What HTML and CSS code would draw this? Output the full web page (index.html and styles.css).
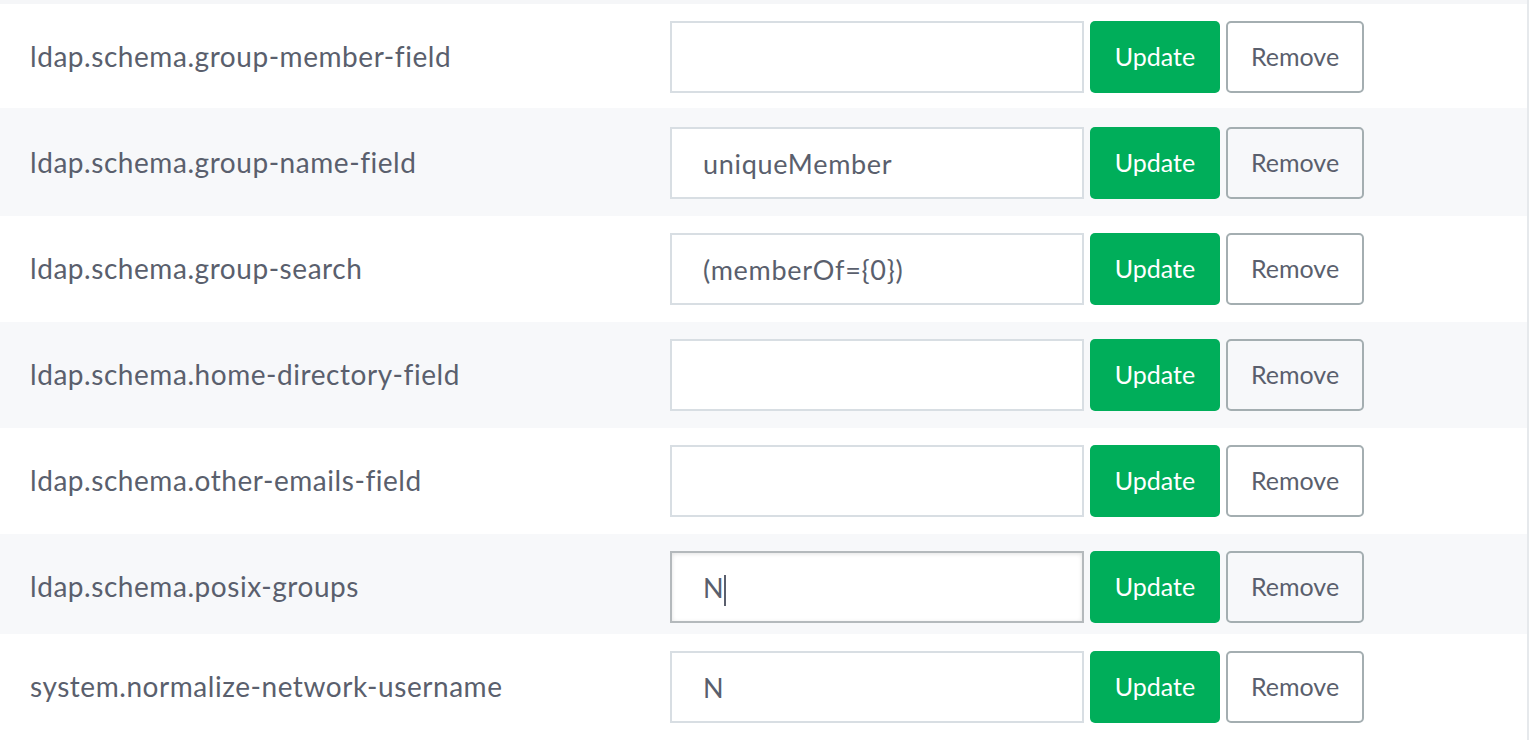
FILE: index.html
```html
<!DOCTYPE html>
<html lang="en">
<head>
<meta charset="utf-8">
<title>Settings</title>
<link rel="stylesheet" href="styles.css">
</head>
<body>
<div class="table">
  <div class="strip"></div>
  <div class="row row--first">
    <div class="label">ldap.schema.group-member-field</div>
    <div class="controls">
      <div class="field"></div>
      <button class="btn btn-update">Update</button>
      <button class="btn btn-remove">Remove</button>
    </div>
  </div>
  <div class="row row--alt row--tall">
    <div class="label">ldap.schema.group-name-field</div>
    <div class="controls">
      <div class="field">uniqueMember</div>
      <button class="btn btn-update">Update</button>
      <button class="btn btn-remove">Remove</button>
    </div>
  </div>
  <div class="row">
    <div class="label">ldap.schema.group-search</div>
    <div class="controls">
      <div class="field">(memberOf={0})</div>
      <button class="btn btn-update">Update</button>
      <button class="btn btn-remove">Remove</button>
    </div>
  </div>
  <div class="row row--alt">
    <div class="label">ldap.schema.home-directory-field</div>
    <div class="controls">
      <div class="field"></div>
      <button class="btn btn-update">Update</button>
      <button class="btn btn-remove">Remove</button>
    </div>
  </div>
  <div class="row">
    <div class="label">ldap.schema.other-emails-field</div>
    <div class="controls">
      <div class="field"></div>
      <button class="btn btn-update">Update</button>
      <button class="btn btn-remove">Remove</button>
    </div>
  </div>
  <div class="row row--alt row--short">
    <div class="label">ldap.schema.posix-groups</div>
    <div class="controls">
      <div class="field field--focus">N<span class="caret"></span></div>
      <button class="btn btn-update">Update</button>
      <button class="btn btn-remove">Remove</button>
    </div>
  </div>
  <div class="row">
    <div class="label">system.normalize-network-username</div>
    <div class="controls">
      <div class="field">N</div>
      <button class="btn btn-update">Update</button>
      <button class="btn btn-remove">Remove</button>
    </div>
  </div>
</div>
</body>
</html>
```

FILE: styles.css
```css
html, body {
  margin: 0;
  padding: 0;
  background: #ffffff;
  overflow: hidden;
}

body {
  font-family: Lato, "Source Sans Pro", "Liberation Sans", sans-serif;
  color: #5a5f6d;
  width: 1530px;
  height: 740px;
}

.table {
  width: 1529px;
  height: 740px;
  border-right: 2px solid #e6e9ec;
  box-sizing: border-box;
}

.strip {
  height: 4px;
  background: #f5f6f8;
}

.row {
  display: flex;
  align-items: flex-start;
  height: 106px;
  padding-top: 17px;
  box-sizing: border-box;
  background: #ffffff;
}

.row--first { height: 104px; }
.row--tall { height: 108px; padding-top: 19px; }
.row--short { height: 100px; }
.row--alt { background: #f7f8fa; }

.label {
  width: 670px;
  padding-left: 30px;
  box-sizing: border-box;
  height: 72px;
  display: flex;
  align-items: center;
  font-size: 28px;
  letter-spacing: 0.55px;
  padding-bottom: 2px;
}

.controls {
  display: flex;
  gap: 6px;
}

.field {
  width: 414px;
  height: 72px;
  box-sizing: border-box;
  border: 2px solid #d8dee3;
  background: #ffffff;
  padding-left: 31px;
  display: flex;
  align-items: center;
  font-size: 27px;
  letter-spacing: 0.7px;
  color: #5a5f6d;
}

.field--focus {
  border-color: #b4b9bc;
  box-shadow: inset 0 1px 4px rgba(0, 0, 0, 0.12);
}

.caret {
  display: inline-block;
  width: 2px;
  height: 31px;
  background: #5a5f6d;
  margin-left: 0;
  margin-top: 6px;
}

.btn {
  height: 72px;
  box-sizing: border-box;
  border-radius: 5px;
  font-family: Lato, "Source Sans Pro", "Liberation Sans", sans-serif;
  font-size: 25px;
  padding: 0 0 2px 0;
  cursor: pointer;
}

.btn-update {
  width: 130px;
  background: #00ae5a;
  border: 0;
  color: #ffffff;
}

.btn-remove {
  width: 138px;
  background: transparent;
  border: 2px solid #a4aeb1;
  color: #5a5f6d;
}
```
